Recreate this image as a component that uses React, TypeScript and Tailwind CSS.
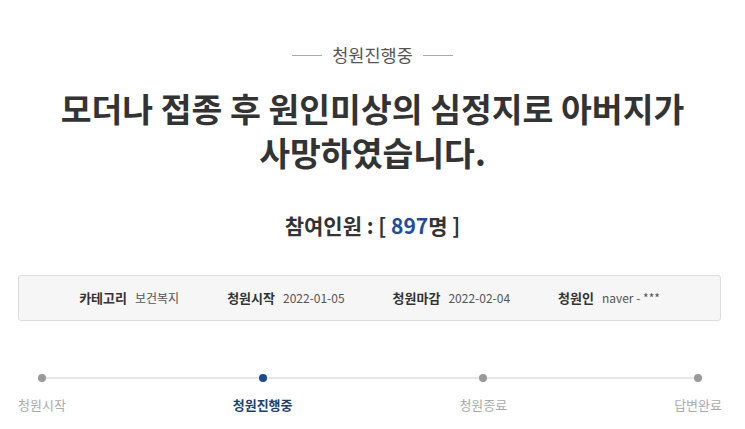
import React from 'react';

const FONT = { fontFamily: '"Noto Sans CJK KR", "Noto Sans", sans-serif' };

const INFO = [
  { label: '카테고리', value: '보건복지' },
  { label: '청원시작', value: '2022-01-05' },
  { label: '청원마감', value: '2022-02-04' },
  { label: '청원인', value: 'naver - ***' },
];

const STEPS = [
  { label: '청원시작', active: false },
  { label: '청원진행중', active: true },
  { label: '청원종료', active: false },
  { label: '답변완료', active: false },
];

export default function App() {
  return (
    <div className="w-[745px] h-[429px] overflow-hidden bg-white" style={FONT}>
      {/* Status label */}
      <div className="flex items-center justify-center gap-[10px] pt-[43px]">
        <span className="h-px w-[30px] bg-[#aaaaaa]" />
        <span className="text-[17.5px] leading-[24px] text-[#555555]">청원진행중</span>
        <span className="h-px w-[30px] bg-[#aaaaaa]" />
      </div>

      {/* Title */}
      <h1 className="mt-[19px] text-center text-[33.5px] leading-[44px] font-bold text-[#333333]">
        모더나 접종 후 원인미상의 심정지로 아버지가
        <br />
        사망하였습니다.
      </h1>

      {/* Participants */}
      <div className="mt-[37px] text-center text-[21px] leading-[28px] font-bold text-[#333333]">
        참여인원 : [ <span className="text-[#1f4d9b]">897</span>명 ]
      </div>

      {/* Info box */}
      <div className="ml-[18px] mt-[36px] flex h-[46px] w-[703px] items-center justify-center gap-[48px] rounded-[3px] border border-[#dddddd] bg-[#f6f6f6]">
        {INFO.map((item) => (
          <div key={item.label} className="flex items-center gap-[8px]">
            <span className="text-[13px] font-bold text-[#333333]">{item.label}</span>
            <span className="text-[12px] text-[#555555]">{item.value}</span>
          </div>
        ))}
      </div>

      {/* Progress */}
      <div className="relative ml-[18px] mt-[53px] w-[704px]">
        <div className="absolute left-[23px] right-[23px] top-[3px] h-[2px] bg-[#e6e6e6]" />
        <div className="relative flex justify-between">
          {STEPS.map((step) => (
            <div key={step.label} className="flex flex-col items-center">
              <span
                className={`h-[8px] w-[8px] rounded-full ${
                  step.active ? 'bg-[#1c4a97]' : 'bg-[#999999]'
                }`}
              />
              <span
                className={`mt-[14px] text-[13px] leading-[18px] ${
                  step.active ? 'font-bold text-[#1f3f73]' : 'text-[#aaaaaa]'
                }`}
              >
                {step.label}
              </span>
            </div>
          ))}
        </div>
      </div>
    </div>
  );
}
